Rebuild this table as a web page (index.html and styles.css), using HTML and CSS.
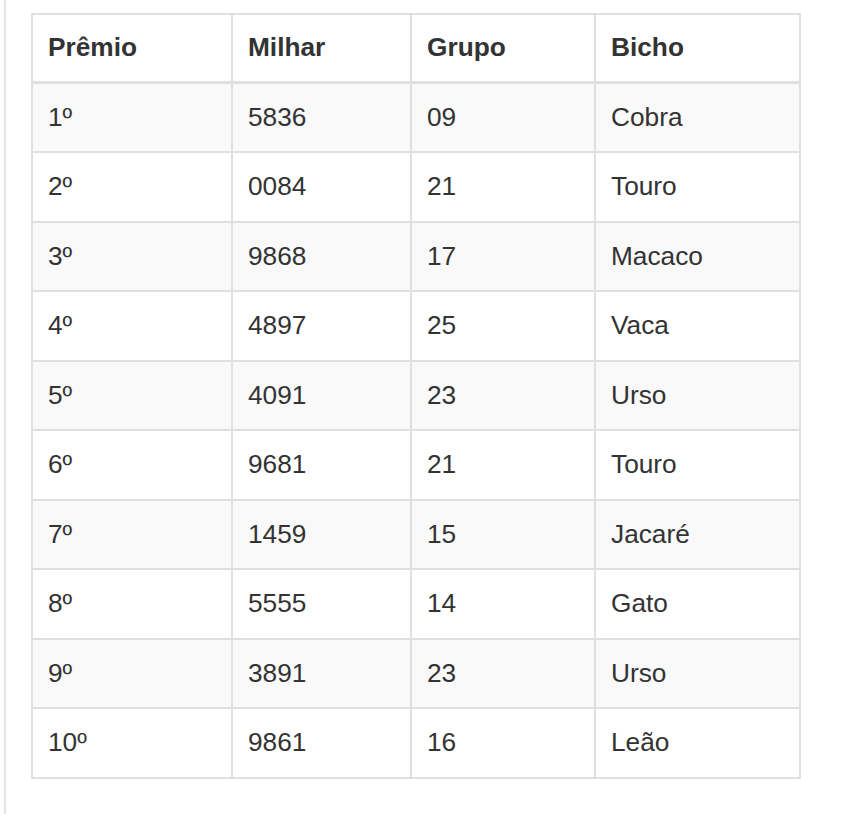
FILE: index.html
```html
<!DOCTYPE html>
<html lang="pt">
<head>
<meta charset="utf-8">
<title>Resultado</title>
<link rel="stylesheet" href="styles.css">
</head>
<body>
<div class="page">
  <table class="results">
    <colgroup>
      <col class="c1"><col class="c2"><col class="c3"><col class="c4">
    </colgroup>
    <thead>
      <tr><th>Prêmio</th><th>Milhar</th><th>Grupo</th><th>Bicho</th></tr>
    </thead>
    <tbody>
      <tr><td>1º</td><td>5836</td><td>09</td><td>Cobra</td></tr>
      <tr><td>2º</td><td>0084</td><td>21</td><td>Touro</td></tr>
      <tr><td>3º</td><td>9868</td><td>17</td><td>Macaco</td></tr>
      <tr><td>4º</td><td>4897</td><td>25</td><td>Vaca</td></tr>
      <tr><td>5º</td><td>4091</td><td>23</td><td>Urso</td></tr>
      <tr><td>6º</td><td>9681</td><td>21</td><td>Touro</td></tr>
      <tr><td>7º</td><td>1459</td><td>15</td><td>Jacaré</td></tr>
      <tr><td>8º</td><td>5555</td><td>14</td><td>Gato</td></tr>
      <tr><td>9º</td><td>3891</td><td>23</td><td>Urso</td></tr>
      <tr><td>10º</td><td>9861</td><td>16</td><td>Leão</td></tr>
    </tbody>
  </table>
</div>
</body>
</html>
```
FILE: styles.css
```css
html, body {
  margin: 0;
  padding: 0;
  background: #fff;
}
body {
  font-family: Arial, "Liberation Sans", Helvetica, sans-serif;
  color: #333;
}
.page {
  margin-left: 4px;
  border-left: 2px solid #e6e6e6;
  min-height: 814px;
  box-sizing: border-box;
  padding: 13px 0 0 25px;
}
.results {
  border-collapse: collapse;
  table-layout: fixed;
  width: 768px;
  border: 2px solid #e0e0e0;
  font-size: 26.25px;
  line-height: 37.5px;
}
.c1 { width: 200px; }
.c2 { width: 179px; }
.c3 { width: 184px; }
.c4 { width: 205px; }
.results th,
.results td {
  text-align: left;
  padding: 15px;
  border: 2px solid #e0e0e0;
  vertical-align: top;
}
.results th {
  font-weight: bold;
  border-bottom-width: 3px;
  padding-top: 14px;
  padding-bottom: 14px;
}
.results tbody tr:nth-child(odd) {
  background: #f9f9f9;
}
```
